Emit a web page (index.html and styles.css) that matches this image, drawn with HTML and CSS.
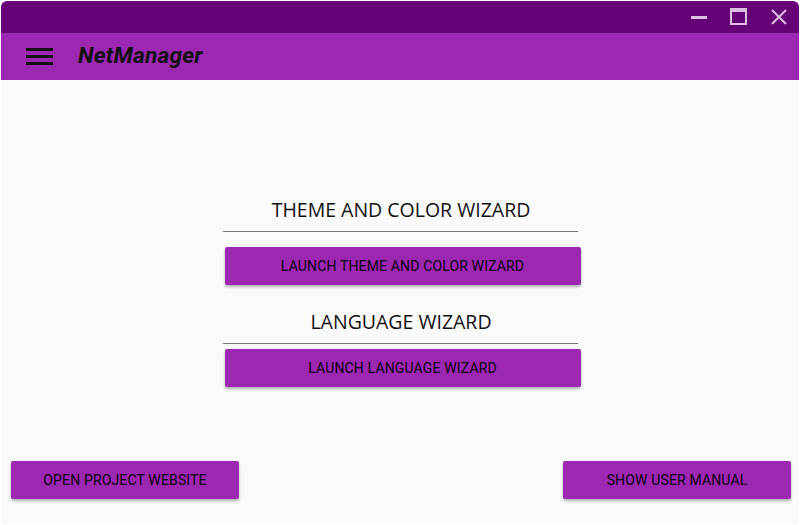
FILE: index.html
```html
<!DOCTYPE html>
<html>
<head>
<meta charset="utf-8">
<link rel="stylesheet" href="styles.css">
</head>
<body>
<div class="window">
  <div class="titlebar">
    <span class="tb-btn">
      <svg width="16" height="16" viewBox="0 0 16 16"><rect x="0" y="7" width="16" height="3" fill="#dcc0e2"/></svg>
    </span>
    <span class="tb-btn">
      <svg width="18" height="18" viewBox="0 0 18 18"><rect x="1" y="1" width="15" height="15" fill="none" stroke="#dcc0e2" stroke-width="2"/><rect x="1" y="1" width="15" height="3" fill="#dcc0e2"/></svg>
    </span>
    <span class="tb-btn">
      <svg width="18" height="18" viewBox="0 0 18 18"><path d="M2 2 L16 16 M16 2 L2 16" stroke="#dcc0e2" stroke-width="2"/></svg>
    </span>
  </div>
  <div class="toolbar">
    <svg class="menu" width="28" height="20" viewBox="0 0 28 20"><rect x="0" y="1" width="27" height="3" fill="#111"/><rect x="0" y="8" width="27" height="3" fill="#111"/><rect x="0" y="15" width="27" height="3" fill="#111"/></svg>
    <span class="app-title">NetManager</span>
  </div>
  <div class="content">
    <div class="center">
      <div class="section">
        <div class="heading">THEME AND COLOR WIZARD</div>
        <div class="rule"></div>
        <button class="btn wide">LAUNCH THEME AND COLOR WIZARD</button>
      </div>
      <div class="section">
        <div class="heading">LANGUAGE WIZARD</div>
        <div class="rule"></div>
        <button class="btn wide">LAUNCH LANGUAGE WIZARD</button>
      </div>
    </div>
    <div class="footer">
      <button class="btn foot">OPEN PROJECT WEBSITE</button>
      <button class="btn foot">SHOW USER MANUAL</button>
    </div>
  </div>
</div>
</body>
</html>
```
FILE: styles.css
```css
html, body {
  margin: 0;
  padding: 0;
  background: #ffffff;
}
body {
  width: 800px;
  height: 525px;
  padding: 1px;
  box-sizing: border-box;
  font-family: Roboto, "Liberation Sans", sans-serif;
}
.window {
  width: 798px;
  height: 523px;
  border-radius: 6px 6px 4px 4px;
  overflow: hidden;
  background: #fafafa;
  display: flex;
  flex-direction: column;
}
.titlebar {
  height: 32px;
  background: #660077;
  display: flex;
  justify-content: flex-end;
  align-items: center;
  padding-right: 0;
}
.tb-btn {
  width: 40px;
  height: 32px;
  display: flex;
  align-items: center;
  justify-content: center;
}
.toolbar {
  height: 47px;
  background: #9c27b0;
  display: flex;
  align-items: center;
  padding-left: 25px;
}
.menu {
  margin-right: 24px;
}
.app-title {
  font-family: Roboto, sans-serif;
  font-weight: 700;
  font-style: italic;
  font-size: 22.7px;
  color: #111;
  letter-spacing: 0.2px;
  margin-top: -3px;
}
.content {
  flex: 1;
  display: flex;
  flex-direction: column;
}
.center {
  flex: 1;
  display: flex;
  flex-direction: column;
  align-items: center;
  padding-top: 116px;
  padding-left: 2px;
  gap: 23px;
}
.section {
  width: 356px;
  display: flex;
  flex-direction: column;
  align-items: center;
}
.heading {
  font-family: "Open Sans", sans-serif;
  font-weight: 400;
  font-size: 19.5px;
  color: #111;
  line-height: 27px;
  padding-bottom: 8px;
}
.rule {
  width: 355px;
  height: 1px;
  background: #777;
  margin-left: -1px;
}
.btn {
  border: none;
  background: #9c27b0;
  color: #0a0010;
  font-family: Roboto, sans-serif;
  font-weight: 400;
  font-size: 14px;
  letter-spacing: 0.15px;
  height: 38px;
  border-radius: 2px;
  box-shadow: 0 2px 3px rgba(0,0,0,0.3);
  padding: 0;
}
.section:first-child .btn { margin-top: 15px; }
.section:last-child .btn { margin-top: 5px; }
.wide {
  width: 356px;
  margin-left: 3px;
}
.footer {
  display: flex;
  justify-content: space-between;
  padding: 0 8px 25px 10px;
}
.foot {
  width: 228px;
}
```
